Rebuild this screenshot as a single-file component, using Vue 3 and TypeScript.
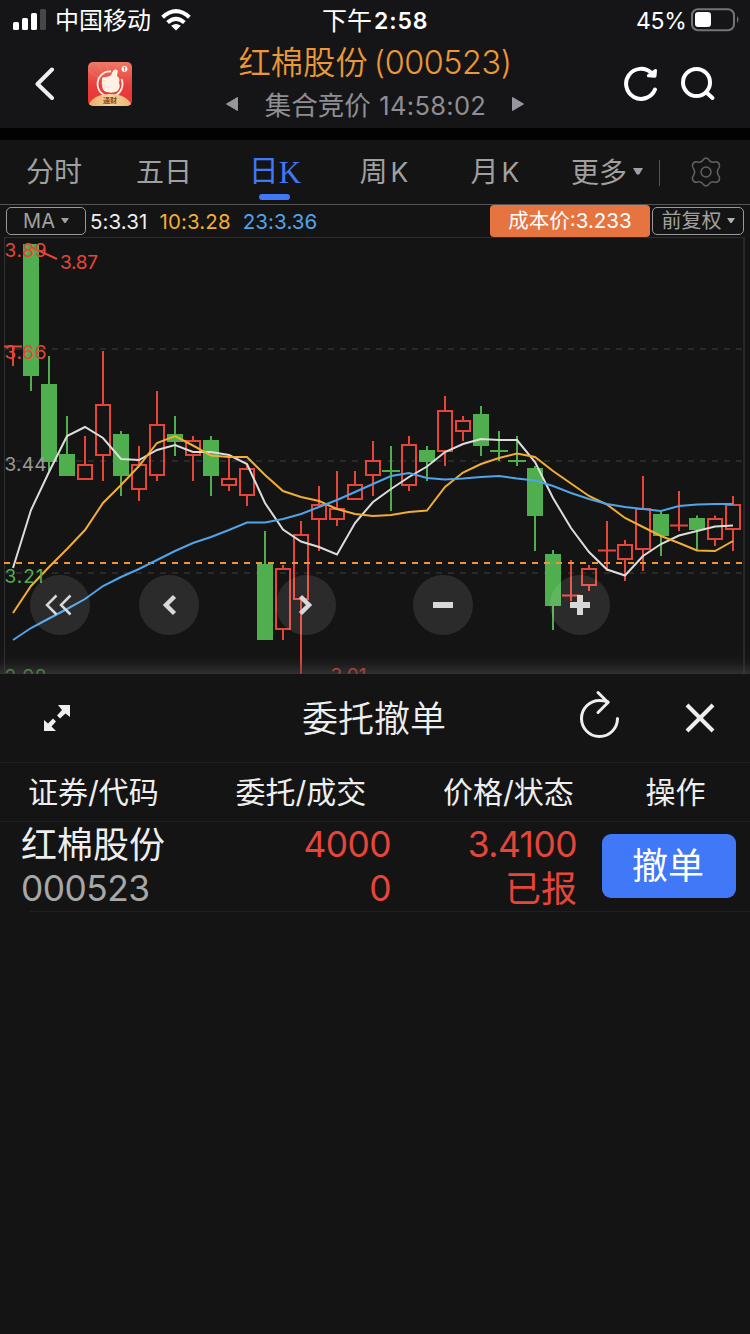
<script setup lang="ts">
type Candle = [kind: 'r' | 'g', high: number, top: number, bottom: number, low: number]

// Vertical positions are chart units measured from the top of the screen.
const candles: Candle[] = [
  ['r', 346, 346.5, 346.5, 366], ['g', 244, 244, 376, 391], ['g', 356, 384, 462, 471],
  ['g', 416, 454, 476, 476], ['r', 436, 464, 480, 480], ['r', 351, 404, 456, 481],
  ['g', 431, 434, 476, 496], ['r', 446, 464, 490, 501], ['r', 391, 424, 476, 481],
  ['g', 416, 434, 442, 456], ['r', 436, 440, 456, 481], ['g', 436, 440, 476, 496],
  ['r', 458, 478, 486, 491], ['r', 465, 468, 496, 506], ['g', 531, 564, 640, 640],
  ['r', 565, 568, 630, 640], ['r', 521, 534, 600, 680], ['r', 486, 504, 520, 551],
  ['r', 471, 508, 520, 526], ['r', 471, 484, 500, 500], ['r', 441, 460, 476, 496],
  ['g', 446, 471, 471, 511], ['r', 436, 444, 486, 491], ['g', 446, 450, 462, 481],
  ['r', 396, 410, 452, 466], ['r', 416, 420, 432, 441], ['g', 406, 414, 446, 456],
  ['g', 431, 451, 451, 461], ['g', 436, 461, 461, 466], ['g', 466, 468, 516, 551],
  ['g', 550, 554, 606, 630], ['r', 560, 595.5, 595.5, 601], ['r', 565, 568, 586, 591],
  ['r', 521, 550.5, 550.5, 571], ['r', 540, 544, 560, 581], ['r', 476, 508, 550, 571],
  ['g', 511, 514, 536, 556], ['r', 491, 525.5, 525.5, 531], ['g', 515.5, 518, 530, 551],
  ['r', 515.5, 518, 540, 546], ['r', 496, 504, 530, 551],
]

const ma5 = [568, 510, 472, 436, 427, 438, 459, 460, 450, 445, 452, 452, 455, 464, 503, 529.5, 541.5, 547, 554.5, 523, 502, 489, 477, 466.5, 452, 444, 439, 440, 440, 462, 498, 528, 552, 569.5, 575.5, 556, 544, 535.5, 531, 526.5, 525.5]
const ma10 = [613, 586, 567, 549, 530, 503, 485, 466, 443, 436, 445.5, 455.5, 457, 457, 475, 491, 497, 501, 509, 514, 516, 515, 512, 510.5, 487, 472.5, 464, 458, 453.5, 457, 471, 483.5, 496, 504.5, 518, 527, 536, 543, 550.5, 551, 541]
const ma23 = [640, 628, 618.5, 609, 599, 586, 577, 569, 560, 551, 543, 537, 530, 522.5, 522.5, 519, 514, 507, 500, 492, 484, 476, 473, 478, 479.5, 478.5, 477, 476, 478.5, 480.5, 486, 493, 499, 504, 507, 509, 511, 506, 504.5, 504, 504]

const cx = (i: number) => 13 + 18 * i
const line = (ys: number[]) => ys.map((y, i) => `${cx(i)},${y}`).join(' ')
const color = (k: string) => (k === 'r' ? '#e6463a' : '#4fae4e')
const tabs = ['分时', '五日', '日K', '周K', '月K']
</script>

<template>
  <div class="screen">
    <header>
      <div class="status">
        <svg class="signal" width="34" height="22" viewBox="0 0 34 22">
          <rect x="0" y="13" width="6" height="8" rx="1.5" fill="#fff" />
          <rect x="9" y="9" width="6" height="12" rx="1.5" fill="#fff" />
          <rect x="18" y="4" width="6" height="17" rx="1.5" fill="#fff" />
          <rect x="27" y="0" width="6" height="21" rx="1.5" fill="#47474a" />
        </svg>
        <span class="carrier">中国移动</span>
        <svg class="wifi" width="30" height="22" viewBox="0 0 30 22" fill="none" stroke="#fff" stroke-width="4">
          <path d="M1.6 8.2Q15-4 28.4 8.2" />
          <path d="M6.6 13.6Q15 6 23.4 13.6" />
          <path d="M15 21.6L10.2 16.8Q15 13 19.8 16.8Z" fill="#fff" stroke="none" />
        </svg>
        <span class="clock">下午<b>2:58</b></span>
        <span class="percent">45%</span>
        <svg class="battery" width="48" height="24" viewBox="0 0 48 24">
          <rect x="1" y="1.2" width="42" height="21" rx="6" fill="none" stroke="#747477" stroke-width="2" />
          <rect x="4" y="4" width="16" height="15" rx="3.2" fill="#fff" />
          <path d="M46 8Q49 11.5 46 15Z" fill="#747477" />
        </svg>
      </div>
      <div class="nav">
        <svg class="back" width="22" height="34" viewBox="0 0 22 34"><path d="M19 2.500L4.500 17L19 31" fill="none" stroke="#eee" stroke-width="4" stroke-linecap="round" stroke-linejoin="round" /></svg>
        <svg class="app" width="44" height="44" viewBox="0 0 44 44">
          <defs>
            <linearGradient id="red" x2="0" y2="1"><stop stop-color="#ee7965" /><stop offset=".55" stop-color="#e93d3b" /><stop offset="1" stop-color="#e73538" /></linearGradient>
            <linearGradient id="gold"><stop stop-color="#e9a963" /><stop offset=".5" stop-color="#f5d49b" /><stop offset="1" stop-color="#e9b66f" /></linearGradient>
            <clipPath id="tile"><rect width="44" height="44" rx="5" /></clipPath>
          </defs>
          <g clip-path="url(#tile)">
            <rect width="44" height="44" fill="url(#red)" />
            <path d="M8 0L17 14M18 0L20 10M0 8L13 18M33 0L27 8" stroke="#f7a187" stroke-width=".8" opacity=".35" />
            <path d="M23 9.500A12.500 12.500 0 1 0 33.500 17" fill="none" stroke="#fff3e9" stroke-width="1.800" />
            <path d="M14 17Q14 14.500 18 15L23 13.500Q24.500 8.500 27 7.500Q30.500 7 29.500 11L29 14Q32.500 16 31 21Q33 25 29.500 29Q24 32 17 29.500Q13 27 14 17Z" fill="#fff2e5" />
            <path d="M14 19H17M14 23H17M14 27H17" stroke="#f2c6ad" stroke-width=".7" />
            <circle cx="36.500" cy="7" r="2.900" fill="#fff" />
            <path d="M36.500 5V9M35.300 6.300L36.500 5L37.700 6.300" fill="none" stroke="#e84d45" stroke-width=".8" />
            <path d="M0 44Q5 32 22 32T44 44Z" fill="url(#gold)" />
            <text x="22" y="41" text-anchor="middle" class="app-label">通财</text>
          </g>
        </svg>
        <div class="title">
          <h1>红棉股份 <span>(000523)</span></h1>
          <div class="session">
            <svg width="12" height="16" viewBox="0 0 12 16"><path d="M11.500 1.500V14.500L.5 8Z" fill="#96969d" stroke="#96969d" stroke-linejoin="round" /></svg>
            <span>集合竞价 <i>14:58:02</i></span>
            <svg width="12" height="16" viewBox="0 0 12 16"><path d="M.5 1.500V14.500L11.500 8Z" fill="#96969d" stroke="#96969d" stroke-linejoin="round" /></svg>
          </div>
        </div>
        <svg class="reload" width="36" height="36" viewBox="0 0 36 36">
          <path d="M28.500 7A15 15 0 1 0 32 23.500" fill="none" stroke="#fff" stroke-width="4" stroke-linecap="round" />
          <path d="M32.500 4.500L32 10.200L25.300 9.700Z" fill="#fff" stroke="#fff" stroke-width="3" stroke-linejoin="round" />
        </svg>
        <svg class="search" width="36" height="36" viewBox="0 0 36 36" fill="none" stroke="#fff" stroke-width="4" stroke-linecap="round"><circle cx="16.500" cy="16.500" r="13.500" /><path d="M26.500 26.500L32.500 32" /></svg>
      </div>
    </header>

    <nav class="tabs">
      <span v-for="t in tabs" :key="t" class="tab" :class="{ active: t === '日K' }">
        {{ t[0] }}<span v-if="t[1] === 'K'" class="k">K</span><template v-else>{{ t[1] }}</template>
      </span>
      <span class="more">更多<svg width="10" height="7" viewBox="0 0 10 7"><path d="M0 0H10L6.500 6Q5 7.500 3.500 6Z" fill="#a0a0a0" /></svg></span>
      <span class="sep"></span>
      <svg class="gear" width="32" height="32" viewBox="-16 -16 32 32" fill="none" stroke="#626262" stroke-width="1.500" stroke-linejoin="round">
        <circle r="5" />
        <path d="M-3-12Q0-16 3-12Q5-9 8.500-10Q12.500-11 13.500-7Q14-5 12.200-3Q10.500 0 12.200 3Q14 5 13.500 7Q12.500 11 8.500 10Q5 9 3 12Q0 16-3 12Q-5 9-8.500 10Q-12.500 11-13.500 7Q-14 5-12.200 3Q-10.500 0-12.200-3Q-14-5-13.500-7Q-12.500-11-8.500-10Q-5-9-3-12Z" />
      </svg>
    </nav>

    <div class="indicators">
      <span class="box ma">MA<svg width="8" height="6" viewBox="0 0 8 6"><path d="M0 0H8L5 4.500Q4 5.500 3 4.500Z" fill="#a0a0a0" /></svg></span>
      <span class="num m5">5:3.31</span><span class="num m10">10:3.28</span><span class="num m23">23:3.36</span>
      <span class="cost">成本价:3.233</span>
      <span class="box adj">前复权<svg width="8" height="6" viewBox="0 0 8 6"><path d="M0 0H8L5 4.500Q4 5.500 3 4.500Z" fill="#b0b0b0" /></svg></span>
    </div>

    <div class="chart">
      <svg width="750" height="437" viewBox="0 237 750 437">
        <path d="M4 237H744" stroke="#2d2d2d" stroke-width="2" />
        <path d="M4.500 237V674" stroke="#303030" />
        <path d="M744 237V674" stroke="#282828" stroke-width="2" />
        <path v-for="y in [349, 461, 573]" :key="y" :d="`M4 ${y}H743`" stroke="#292929" stroke-width="2" stroke-dasharray="6 6" />
        <g v-for="(c, i) in candles" :key="i" :stroke="color(c[0])" stroke-width="2" fill="none">
          <template v-if="c[2] === c[3]">
            <path :d="`M${cx(i)} ${c[1]}V${c[4]}M${cx(i) - 9} ${c[2]}H${cx(i) + 9}`" />
          </template>
          <template v-else>
            <path :d="`M${cx(i)} ${c[1]}V${c[2]}M${cx(i)} ${c[3]}V${c[4]}`" />
            <rect v-if="c[0] === 'r'" :x="cx(i) - 7" :y="c[2] + 1" width="14" :height="c[3] - c[2] - 2" />
            <rect v-else :x="cx(i) - 8" :y="c[2]" width="16" :height="c[3] - c[2]" :fill="color('g')" stroke="none" />
          </template>
        </g>
        <path d="M4 563H743" stroke="#f09237" stroke-width="2" stroke-dasharray="6 6" />
        <g fill="none" stroke-width="2">
          <polyline :points="line(ma5)" stroke="#ddd" />
          <polyline :points="line(ma10)" stroke="#f2ad35" />
          <polyline :points="line(ma23)" stroke="#50a4e8" />
        </g>
        <path d="M31 247L57 259" stroke="#e6463a" stroke-width="2" />
        <g class="axis">
          <text x="4.500" y="257" fill="#e6463a" textLength="42">3.89</text>
          <text x="60" y="269" fill="#e6463a" textLength="38">3.87</text>
          <text x="4.500" y="359" fill="#e6463a" textLength="42">3.66</text>
          <text x="4.500" y="471" fill="#999" textLength="42">3.44</text>
          <text x="4.500" y="583" fill="#4fae4e" textLength="39">3.21</text>
          <text x="4.500" y="683" fill="#4fae4e" textLength="42">2.98</text>
          <text x="330.500" y="682" fill="#e6463a" textLength="36">3.01</text>
        </g>
        <defs><linearGradient id="fade" x2="0" y2="1"><stop stop-color="#444" stop-opacity="0" /><stop offset=".4" stop-color="#444" stop-opacity=".12" /><stop offset="1" stop-color="#444" stop-opacity=".6" /></linearGradient></defs>
        <rect y="655" width="750" height="19" fill="url(#fade)" />
      </svg>
      <div class="controls">
        <button><svg width="30" height="22" viewBox="-15 -11 30 22"><path d="M-3.500-9.500L-13 0L-3.500 9.500M10.500-9.500L1 0L10.500 9.500" fill="none" stroke="#d8d8d8" stroke-width="2.500" /></svg></button>
        <button class="near"><svg width="22" height="22" viewBox="-11 -11 22 22"><path d="M5.500-8.500L-3 0L5.500 8.500" fill="none" stroke="#d8d8d8" stroke-width="4.500" /></svg></button>
        <button><svg width="22" height="22" viewBox="-11 -11 22 22"><path d="M-5.500-8.500L3 0L-5.500 8.500" fill="none" stroke="#d8d8d8" stroke-width="4.500" /></svg></button>
        <button><svg width="22" height="22" viewBox="-11 -11 22 22"><path d="M-10 0H10" stroke="#d8d8d8" stroke-width="6" /></svg></button>
        <button><svg width="22" height="22" viewBox="-11 -11 22 22"><path d="M-10 0H10M0-10V10" stroke="#d8d8d8" stroke-width="6" /></svg></button>
      </div>
    </div>

    <section class="panel">
      <div class="panel-head">
        <svg class="expand" width="28" height="28" viewBox="0 0 28 28" fill="#eee"><path d="M15 1H27V13L22.500 9.500L17 14.500L14 11.500L19 6ZM1 27V16L5 19.500L10 14.500L13 17.500L8.500 22.500L13 27Z" /></svg>
        <h2>委托撤单</h2>
        <svg class="redo" width="42" height="50" viewBox="-1 0 42 50" fill="none" stroke="#eee" stroke-width="3" stroke-linecap="round" stroke-linejoin="round"><path d="M28 12Q24 10.500 19.500 10.500A18 18 0 1 0 37.500 28.500" /><path d="M18 2.500L28 12.500L18 22.500" /></svg>
        <svg class="close" width="30" height="30" viewBox="0 0 30 30"><path d="M2 2L28 28M28 2L2 28" stroke="#eee" stroke-width="4" /></svg>
      </div>
      <div class="row head"><span>证券/代码</span><span>委托/成交</span><span>价格/状态</span><span>操作</span></div>
      <div class="row order">
        <div class="name"><b>红棉股份</b><i>000523</i></div>
        <div class="qty"><b>4000</b><i>0</i></div>
        <div class="price"><b>3.4100</b><i class="cn">已报</i></div>
        <button class="cancel">撤单</button>
      </div>
      <div class="rule"></div>
    </section>
  </div>
</template>

<style>
html, body { margin: 0; background: #141414; }
</style>

<style scoped>
.screen { width: 750px; height: 1334px; overflow: hidden; background: #141414; color: #eee; font-family: Inter, "Noto Sans CJK SC", sans-serif; font-weight: 400; }
.screen * { box-sizing: border-box; }
svg { display: block; flex: none; }
h1, h2 { margin: 0; font-weight: 350; }
b, i { font-style: normal; font-weight: inherit; }
header { height: 128px; background: #151517; }
.status { height: 40px; display: flex; align-items: center; color: #fff; padding-left: 13px; white-space: nowrap; }
.carrier { margin-left: 8px; width: 97px; font-size: 24px; line-height: 38px; padding-top: 2px; }
.wifi { margin-left: 9px; }
.clock { margin-left: 131px; width: 108px; font-size: 25px; line-height: 38px; padding-top: 2px; display: flex; }
.clock b { margin-left: 2px; font-weight: 600; font-size: 23px; letter-spacing: .9px; }
.percent { margin-left: 206px; width: 55px; font-size: 23px; letter-spacing: -.3px; padding-top: 2px; }
.nav { height: 88px; display: flex; align-items: flex-start; }
.back { margin: 27px 0 0 33px; }
.app { margin: 22px 0 0 33px; }
.app-label { font-size: 7px; fill: #854720; font-weight: 700; }
.title { width: 310px; margin-left: 88px; text-align: center; }
.title h1 { color: #eb9835; font-size: 32.300px; line-height: 44px; padding-top: 1px; white-space: nowrap; }
.title h1 span { margin-left: -3px; letter-spacing: -.4px; }
.session { display: flex; align-items: center; justify-content: center; gap: 27px; height: 38px; color: #8e8e93; font-size: 26.500px; white-space: nowrap; }
.session span { line-height: 36px; padding-top: 2px; }
.session svg:last-child { margin-left: -1px; }
.session i { font-size: 25.500px; letter-spacing: .3px; margin-left: 1px; }
.reload { margin: 26px 0 0 93px; }
.search { margin: 26px 0 0 21px; }
.tabs { height: 77px; border-top: 12px solid #020202; border-bottom: 1px solid #555; display: flex; align-items: flex-start; font-size: 28px; color: #a0a0a0; white-space: nowrap; }
.tab { flex: none; display: flex; justify-content: center; width: 110px; height: 60px; line-height: 64px; padding-right: 2px; }
.tab:nth-child(5) { padding-right: 0; }
.tab .k { margin-left: 3px; font-size: 26.500px; }
.tab.active { position: relative; color: #4078f8; font-size: 30px; padding-right: 0; line-height: 60px; }
.tab.active .k { font-family: "Liberation Serif", serif; font-size: 31px; line-height: 65px; margin-left: 0; }
.tab.active::after { content: ""; position: absolute; left: 39px; top: 54px; width: 31px; height: 6px; border-radius: 3px; background: #4078f8; }
.more { display: flex; align-items: center; gap: 6px; margin-left: 21px; height: 62px; width: 73px; }
.sep { margin: 20px 0 0 15px; width: 1px; height: 26px; background: #555; }
.gear { margin: 16px 0 0 30px; }
.indicators { height: 32px; display: flex; align-items: center; padding-left: 6px; font-size: 20px; white-space: nowrap; }
.box { height: 28px; border: 1px solid #999; border-radius: 5px; display: flex; align-items: center; justify-content: center; color: #a0a0a0; }
.ma { width: 80px; gap: 6px; }
.num { margin-left: 4px; padding-top: 1px; font-size: 20.500px; letter-spacing: .1px; }
.m10 { color: #f2ad35; margin-left: 12px; } .m23 { color: #50a4e8; margin-left: 12px; }
.cost { margin-left: auto; width: 160px; height: 32px; line-height: 32px; text-align: center; border-radius: 4px; background: #e67440; color: #fff; font-size: 20.500px; }
.adj { width: 92px; gap: 5px; margin: 0 6px 0 2px; line-height: 26px; }
.chart { height: 437px; position: relative; overflow: hidden; }
.axis { font-size: 19px; }
.controls { position: absolute; left: 30px; top: 338px; display: flex; gap: 77px; }
.controls button { width: 60px; height: 60px; padding: 0; border: 0; border-radius: 50%; background: rgba(255,255,255,.1); display: grid; place-items: center; }
.controls .near { margin-left: -28px; }
.panel-head { height: 88px; display: flex; align-items: center; }
.expand { margin-left: 43px; }
.panel-head h2 { margin-left: 231px; width: 144px; font-size: 36px; line-height: 88px; padding-top: 2px; }
.redo { margin: -6px 0 0 133px; }
.close { margin-left: 64px; }
.row { border-top: 1px solid #202020; display: flex; white-space: nowrap; }
.head { height: 59px; font-size: 30px; line-height: 59px; padding-left: 28px; }
.head span { flex: none; width: 207.500px; }
.head span:nth-child(3) { width: 202.500px; }
.order { height: 90px; font-size: 36px; color: #e6463a; }
.order b, .order i { display: block; line-height: 44px; height: 44px; }
.name { width: 200px; padding-left: 21px; color: #eee; }
.name b, .name i, .qty b, .qty i, .price b { padding-top: 1px; }
.name i { color: #a7a7a7; }
.name i, .qty, .price b { font-size: 35.300px; letter-spacing: -.5px; }
.qty { width: 191px; text-align: right; }
.price { width: 186px; text-align: right; }
.price .cn { padding-top: 1px; }
.cancel { margin: 12px 0 0 25px; width: 134px; height: 64px; border: 0; border-radius: 9px; background: #4078f8; color: #fff; font: inherit; line-height: 64px; padding: 0 2px 0 0; }
.rule { margin-left: 30px; height: 1px; background: #202020; }
</style>
